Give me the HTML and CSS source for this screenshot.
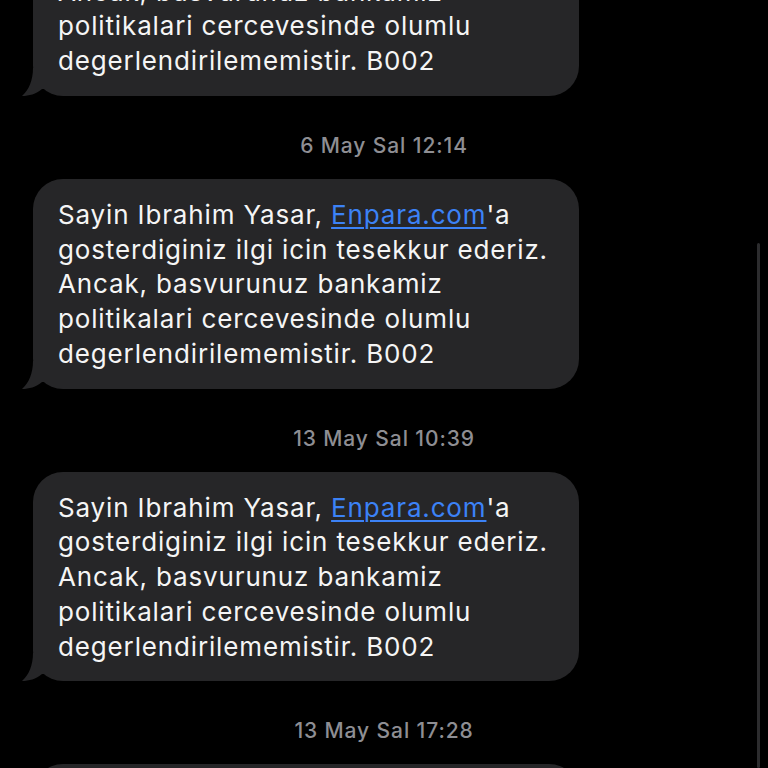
FILE: index.html
```html
<!DOCTYPE html>
<html lang="tr">
<head>
  <meta charset="UTF-8" />
  <meta name="viewport" content="width=device-width, initial-scale=1.0" />
  <title>Mesajlar</title>
  <link rel="stylesheet" href="styles.css">
</head>
<body>

  <div class="thread">
    <div class="bubble first">
      Sayin Ibrahim Yasar, <a href="#">Enpara.com</a>'a gosterdiginiz ilgi icin tesekkur ederiz. Ancak, basvurunuz bankamiz politikalari cercevesinde olumlu degerlendirilememistir. B002
      <svg class="tail" viewBox="0 0 26 28" width="26" height="28"><path d="M11 0 C11 12 7 22 0 28 C7 28 14 26 20 21 L26 21 L26 0 Z"/></svg>
    </div>

    <div class="stamp">6 May Sal 12:14</div>

    <div class="bubble">
      Sayin Ibrahim Yasar, <a href="#">Enpara.com</a>'a gosterdiginiz ilgi icin tesekkur ederiz. Ancak, basvurunuz bankamiz politikalari cercevesinde olumlu degerlendirilememistir. B002
      <svg class="tail" viewBox="0 0 26 28" width="26" height="28"><path d="M11 0 C11 12 7 22 0 28 C7 28 14 26 20 21 L26 21 L26 0 Z"/></svg>
    </div>

    <div class="stamp">13 May Sal 10:39</div>

    <div class="bubble">
      Sayin Ibrahim Yasar, <a href="#">Enpara.com</a>'a gosterdiginiz ilgi icin tesekkur ederiz. Ancak, basvurunuz bankamiz politikalari cercevesinde olumlu degerlendirilememistir. B002
      <svg class="tail" viewBox="0 0 26 28" width="26" height="28"><path d="M11 0 C11 12 7 22 0 28 C7 28 14 26 20 21 L26 21 L26 0 Z"/></svg>
    </div>

    <div class="stamp">13 May Sal 17:28</div>

    <div class="bubble">
      Sayin Ibrahim Yasar, <a href="#">Enpara.com</a>'a gosterdiginiz ilgi icin tesekkur ederiz. Ancak, basvurunuz bankamiz politikalari cercevesinde olumlu degerlendirilememistir. B002
    </div>
  </div>

  <div class="scrollbar"></div>

</body>
</html>
```

FILE: styles.css
```css
html, body {
  height: 100%;
}

body {
  margin: 0;
  background-color: #000;
  color: #f5f5f5;
  font-family: Inter, 'Noto Sans', sans-serif;
  overflow: hidden;
}

.thread {
  padding-left: 33px;
}

.bubble {
  position: relative;
  width: 546px;
  box-sizing: border-box;
  padding: 19px 20px 17px 25px;
  background-color: #262628;
  border-radius: 30px;
  font-size: 26px;
  letter-spacing: 0.85px;
  line-height: 34.75px;
}

.bubble.first {
  margin-top: -114px;
}

.bubble a {
  color: #3c82f6;
  text-decoration: underline;
  text-underline-offset: 3px;
  text-decoration-thickness: 1.5px;
}

.tail {
  position: absolute;
  left: -11px;
  bottom: 0;
  fill: #262628;
}

.stamp {
  margin: 38px 0 21px -33px;
  text-align: center;
  font-size: 21px;
  letter-spacing: 0.9px;
  line-height: 24px;
  font-weight: 500;
  color: #8e8e93;
}

.scrollbar {
  position: fixed;
  right: 8px;
  top: 243px;
  bottom: 0;
  width: 3px;
  border-radius: 2px;
  background-color: #2c2c2e;
}
```
